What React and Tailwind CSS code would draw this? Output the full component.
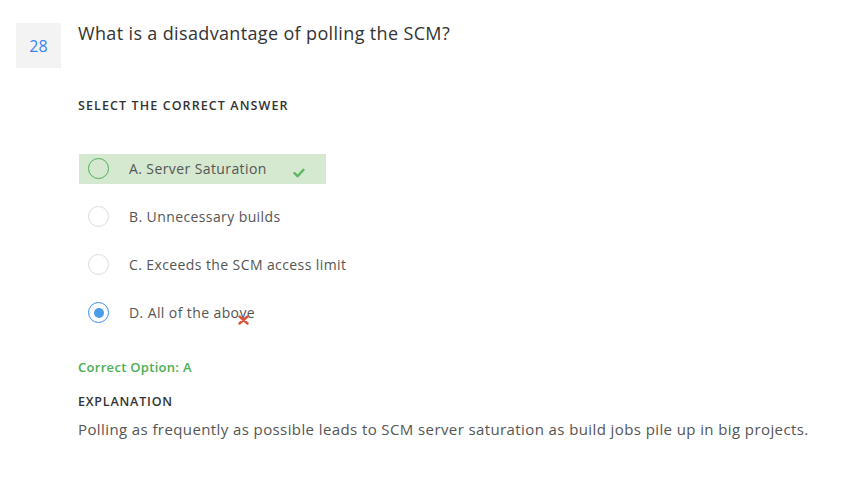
import React from "react";

const options = [
  { label: "A. Server Saturation", state: "correct" },
  { label: "B. Unnecessary builds", state: "none" },
  { label: "C. Exceeds the SCM access limit", state: "none" },
  { label: "D. All of the above", state: "wrong" },
];

const Radio = ({ state }) => {
  if (state === "correct") {
    return <span className="block w-[21px] h-[21px] rounded-full border-[1.5px] border-[#4caf50]" />;
  }
  if (state === "wrong") {
    return (
      <span className="flex items-center justify-center w-[21px] h-[21px] rounded-full border-[1.5px] border-[#3b8cf0]">
        <span className="block w-[10px] h-[10px] rounded-full bg-[#4a9de6]" />
      </span>
    );
  }
  return <span className="block w-[21px] h-[21px] rounded-full border border-[#dddddd]" />;
};

const Check = () => (
  <svg width="12" height="10" viewBox="0 0 12 10">
    <path d="M1.5 5.2 L4.6 8.2 L10.5 1.8" fill="none" stroke="#5cb85c" strokeWidth="2.4" strokeLinecap="round" strokeLinejoin="round" />
  </svg>
);

const Cross = () => (
  <svg width="11" height="10" viewBox="0 0 11 10">
    <path d="M1.5 1.5 L9.5 8.5 M9.5 1.5 L1.5 8.5" stroke="#dc5239" strokeWidth="2.4" strokeLinecap="round" />
  </svg>
);

export default function App() {
  return (
    <div className="w-[857px] h-[478px] bg-white text-[#333] font-['Open_Sans',sans-serif]">
      <div className="flex pt-[23px] pl-4">
        <div className="w-[45px] h-[45px] bg-[#f3f3f3] flex items-center justify-center text-[#3b82f6] text-[16px]">
          28
        </div>
        <div className="ml-[17px] flex-1">
          <h1 className="text-[18px] leading-[22px] mt-[-1px] tracking-[0.35px] text-[#333]">
            What is a disadvantage of polling the SCM?
          </h1>

          <div className="mt-[53px] text-[12.5px] font-semibold tracking-[1.1px] text-[#333]">SELECT THE CORRECT ANSWER</div>

          <div className="mt-[38px] flex flex-col gap-[18px]">
            {options.map((o) => (
              <div
                key={o.label}
                className={
                  o.state === "correct"
                    ? "relative flex items-center h-[30px] w-[247px] ml-px bg-[#d5e8d0] pl-[9px]"
                    : "relative flex items-center h-[30px] ml-px pl-[9px]"
                }
              >
                <Radio state={o.state} />
                <span className="ml-[20px] text-[14px] tracking-[0.4px] text-[#555]">{o.label}</span>
                {o.state === "correct" && (
                  <span className="absolute left-[214px] top-[14px]">
                    <Check />
                  </span>
                )}
                {o.state === "wrong" && (
                  <span className="absolute left-[159px] top-[17px]">
                    <Cross />
                  </span>
                )}
              </div>
            ))}
          </div>

          <div className="mt-[30px] text-[13px] font-semibold tracking-[0.3px] text-[#4caf50]">Correct Option: A</div>

          <div className="mt-[16px] text-[12.5px] font-semibold tracking-[0.8px] text-[#333]">EXPLANATION</div>
          <p className="mt-[6px] text-[15px] tracking-[0.4px] text-[#555]">
            Polling as frequently as possible leads to SCM server saturation as build jobs pile up in big projects.
          </p>
        </div>
      </div>
    </div>
  );
}
